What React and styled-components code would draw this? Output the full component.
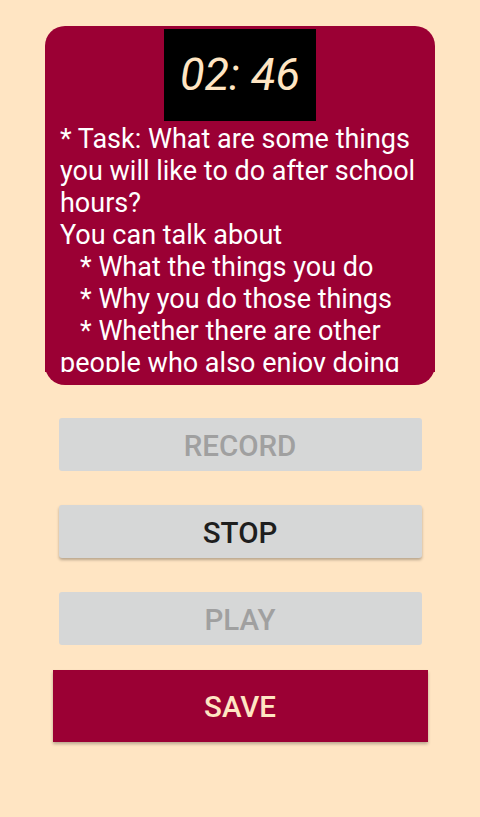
import React from "react";
import styled, { createGlobalStyle } from "styled-components";

const Global = createGlobalStyle`
  html, body {
    margin: 0;
    padding: 0;
    background: #ffe5c3;
    font-family: Roboto, "Noto Sans", sans-serif;
  }
  * { box-sizing: border-box; }
`;

const Page = styled.div`
  width: 480px;
  min-height: 817px;
  padding-top: 26px;
  display: flex;
  flex-direction: column;
  align-items: center;
`;

const Card = styled.section`
  width: 390px;
  background: #9b0034;
  border-radius: 20px;
  padding: 3px 0 13px;
  display: flex;
  flex-direction: column;
  align-items: center;
`;

const Timer = styled.div`
  width: 152px;
  height: 92px;
  background: #000;
  color: #ffe5c3;
  font-style: italic;
  font-size: 45px;
  display: flex;
  align-items: center;
  justify-content: center;
  padding-bottom: 2px;
`;

const Prompt = styled.div`
  align-self: stretch;
  height: 249px;
  margin-top: 2px;
  overflow: hidden;
  background: #9b0034;
  padding: 0 14px 0 15px;
  color: #fff;
  font-size: 27px;
  line-height: 32px;
  white-space: pre-wrap;
`;

const Buttons = styled.div`
  display: flex;
  flex-direction: column;
  align-items: center;
  margin-top: 33px;
`;

const Button = styled.button`
  border: none;
  font-family: Roboto, "Noto Sans", sans-serif;
  font-weight: 500;
  font-size: 29.5px;
  text-transform: uppercase;
  display: flex;
  align-items: center;
  justify-content: center;
  padding: 2px 0 0;
  width: ${(p) => (p.$primary ? "375px" : "363px")};
  height: ${(p) => (p.$primary ? "72px" : "53px")};
  margin-bottom: ${(p) => p.$gap || 0}px;
  border-radius: ${(p) => (p.$primary ? "0" : "3px")};
  background: ${(p) => (p.$primary ? "#9b0034" : "#d6d7d7")};
  color: ${(p) =>
    p.$primary ? "#ffe5c3" : p.disabled ? "#a0a0a0" : "#1e1e1e"};
  box-shadow: ${(p) =>
    p.disabled ? "none" : "0 2px 3px rgba(0, 0, 0, 0.28)"};
`;

const promptText = `* Task: What are some things you will like to do after school hours?
You can talk about
   * What the things you do
   * Why you do those things
   * Whether there are other people who also enjoy doing those things
   * What you learn from them`;

export default function App() {
  return (
    <>
      <Global />
      <Page>
        <Card>
          <Timer>02: 46</Timer>
          <Prompt>{promptText}</Prompt>
        </Card>
        <Buttons>
          <Button disabled $gap={34}>Record</Button>
          <Button $gap={34}>Stop</Button>
          <Button disabled $gap={25}>Play</Button>
          <Button $primary>Save</Button>
        </Buttons>
      </Page>
    </>
  );
}
